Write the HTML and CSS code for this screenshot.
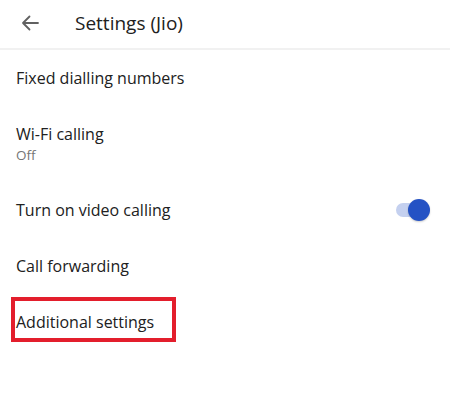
FILE: index.html
```html
<!DOCTYPE html>
<html lang="en">
    <head>
        <meta charset="UTF-8">
        <meta name="viewport" content="width=device-width, initial-scale=1.0">
        <title>Settings (Jio)</title>
        <link rel="stylesheet" href="styles.css">
    </head>

    <body>
        <header class="topbar">
            <button class="back" aria-label="Back">
                <svg width="18" height="16" viewBox="0 0 18 16">
                    <path d="M17 8H2M8.5 1.5L2 8l6.5 6.5" fill="none" stroke="#616161" stroke-width="1.8" stroke-linecap="round" stroke-linejoin="round"/>
                </svg>
            </button>
            <h1 class="title">Settings (Jio)</h1>
        </header>

        <ul class="settings">
            <li class="item">
                <span class="label">Fixed dialling numbers</span>
            </li>
            <li class="item two-line">
                <div>
                    <span class="label">Wi-Fi calling</span>
                    <span class="summary">Off</span>
                </div>
            </li>
            <li class="item">
                <span class="label">Turn on video calling</span>
                <span class="switch on"><span class="thumb"></span></span>
            </li>
            <li class="item">
                <span class="label">Call forwarding</span>
            </li>
            <li class="item">
                <span class="label highlight">Additional settings</span>
            </li>
        </ul>
    </body>

</html>
```

FILE: styles.css
```css
* {
    margin: 0;
    padding: 0;
    box-sizing: border-box;
    font-family: 'Open Sans', 'Noto Sans', sans-serif;
}

body {
    width: 450px;
    min-height: 406px;
    background: white;
    color: #212121;
}

.topbar {
    display: flex;
    align-items: center;
    border-bottom: 2px solid #f1f1f1;
    height: 50px;
    padding-bottom: 2px;

    & .back {
        width: 75px;
        height: 40px;
        padding-left: 21px;
        background: none;
        border: none;
        display: flex;
        align-items: center;
    }

    & .title {
        font-size: 19px;
        font-weight: 400;
        color: #212121;
    }
}

.settings {
    list-style: none;

    & .item {
        height: 56px;
        padding: 0 20px 0 16px;
        display: flex;
        align-items: center;
        justify-content: space-between;
    }

    & .two-line {
        height: 76px;

        & div {
            display: flex;
            flex-direction: column;
        }
    }

    & .label {
        font-size: 16px;
        line-height: 22px;
    }

    & .summary {
        font-size: 13.5px;
        line-height: 20px;
        color: #757575;
    }
}

.switch {
    position: relative;
    width: 24px;
    height: 14px;
    border-radius: 7px;
    background: #c4d0ef;
    margin-right: 10px;

    & .thumb {
        position: absolute;
        top: -4px;
        right: -10px;
        width: 22px;
        height: 22px;
        border-radius: 50%;
        background: #2452c4;
        box-shadow: 0 1px 2px rgba(0, 0, 0, 0.2);
    }
}

/* red annotation frame */
.highlight {
    position: relative;

    &::after {
        content: '';
        box-sizing: border-box;
        position: absolute;
        left: -5px;
        width: 165px;
        top: -14px;
        bottom: -9px;
        border: 4.5px solid #e31e2c;
    }
}
```
